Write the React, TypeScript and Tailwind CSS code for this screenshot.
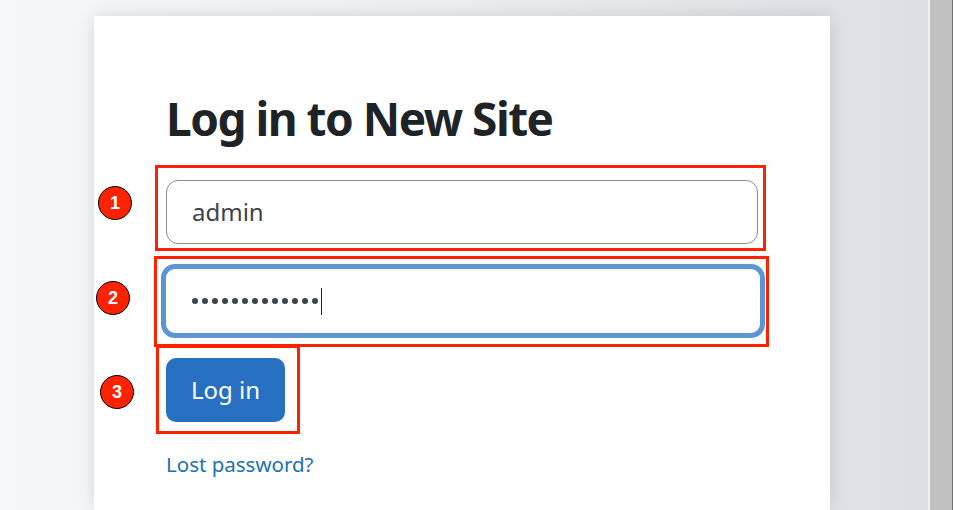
import React from "react";

const marks = [
  { n: "1", box: "left-[155px] top-[165px] w-[611px] h-[86px]", dot: "left-[98px] top-[186px]" },
  { n: "2", box: "left-[154px] top-[256px] w-[615px] h-[91px]", dot: "left-[96px] top-[281px]" },
  { n: "3", box: "left-[156px] top-[345px] w-[144px] h-[89px]", dot: "left-[100px] top-[375px]" },
];

const dots = Array.from({ length: 13 });

export default function App() {
  return (
    <div className="relative flex h-[510px] w-[953px] overflow-hidden font-['Noto_Sans','Open_Sans',sans-serif]">
      {/* page */}
      <div className="flex-1 bg-gradient-to-r from-[#f7f8fa] via-[#eceef1] to-[#dcdfe3] pl-[94px] pt-4">
        <div className="h-full w-[736px] bg-white pl-[72px] pt-[74px] shadow-[0_0_18px_rgba(0,0,0,0.12)]">
          <h1 className="text-[46px] font-bold leading-[57px] tracking-[-1.5px] text-[#1d2327]">
            Log in to New Site
          </h1>

          <div className="mt-[33px] flex flex-col">
            <div className="flex h-16 w-[592px] items-center rounded-xl border border-[#8c8f94] pl-[25px] text-[24px] text-[#3c434a]">
              admin
            </div>

            <div className="ml-[-5px] mt-5 flex h-[74px] w-[604px] items-center rounded-[14px] border-[5px] border-[#5b96d3] pl-[26px]">
              <div className="flex items-center gap-[4px]">
                {dots.map((_, i) => (
                  <span key={i} className="h-[6px] w-[6px] rounded-full bg-[#3c434a]" />
                ))}
              </div>
              <span className="ml-[3px] h-[27px] w-px bg-[#1d2327]" />
            </div>

            <button className="mt-5 flex h-16 w-[119px] items-center justify-center rounded-[10px] bg-[#2770c1] text-[24px] text-white">
              Log in
            </button>

            <a href="#" className="mt-[28px] text-[20.5px] leading-[28px] text-[#2271b1]">
              Lost password?
            </a>
          </div>
        </div>
      </div>

      {/* scrollbar */}
      <div className="flex h-full w-[25px]">
        <div className="w-[2px] bg-[#f0f0f0]" />
        <div className="w-[22px] bg-[#c1c1c1]" />
        <div className="w-px bg-[#707070]" />
      </div>

      {/* annotations */}
      {marks.map((m) => (
        <React.Fragment key={m.n}>
          <div className={`absolute border-[3px] border-[#ff2200] ${m.box}`} />
          <div
            className={`absolute flex h-[34px] w-[34px] items-center justify-center rounded-full border border-black bg-[#ff2200] font-['Liberation_Sans',sans-serif] text-[18px] font-bold text-white ${m.dot}`}
          >
            {m.n}
          </div>
        </React.Fragment>
      ))}
    </div>
  );
}
